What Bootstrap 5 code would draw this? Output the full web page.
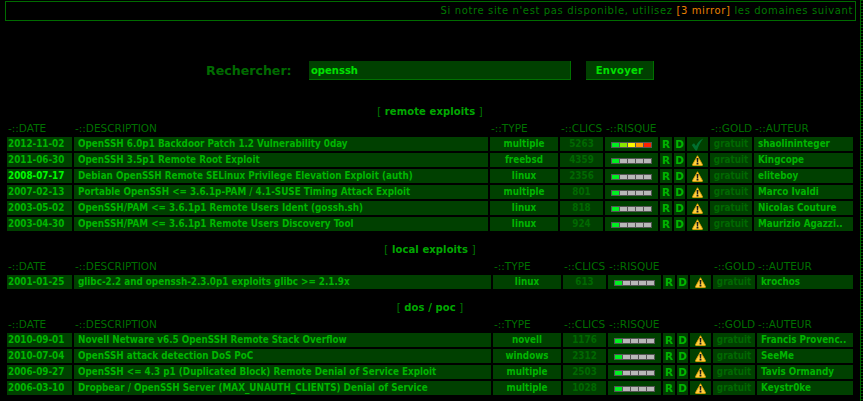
<!DOCTYPE html>
<html lang="fr">
<head>
<meta charset="utf-8">
<title>Rechercher</title>
<link href="https://cdn.jsdelivr.net/npm/bootstrap@5.3.0/dist/css/bootstrap.min.css" rel="stylesheet">
<style>
html{height:100%;overflow:hidden;background:repeating-linear-gradient(#005000 0 1px,#000 1px 3px)}
body{height:100%;overflow:hidden;background:#000;color:#00a800;font-family:"DejaVu Sans",Verdana,sans-serif;font-size:10px;line-height:12px;box-shadow:inset -1px 0 #006000;width:861px;margin:0}
.topbox{margin:1px 0 0 5px;width:851px;height:20px;border:1px solid #006b00;color:#007800;letter-spacing:.63px;line-height:17px;padding-right:2px}
.topbox span{color:#e88000}
.srch{margin-top:40px;height:19px;padding-left:206px}
.srch label{width:103px;font-size:12.6px;line-height:17px;color:#006b00;font-weight:700}
.srch input{width:262px;height:19px;background:#004000;border:0;border-bottom:1px solid #007000;border-right:1px solid #007000;color:#00e000;font:700 10px "DejaVu Sans",sans-serif;padding:1px 2px 0;outline:0}
.srch button{margin-left:15px;width:68px;height:19px;background:#004000;border:0;border-bottom:1px solid #007000;border-right:1px solid #007000;color:#00e000;font:700 10px "DejaVu Sans",sans-serif;letter-spacing:.3px;padding:0}
.sect{font-weight:700;color:#00a800;line-height:12px;padding-right:1px;letter-spacing:.1px}
.sect i{font-style:normal;font-weight:400;color:#007800}
.s1{margin-top:26px}.s2{margin-top:11px}.s3{margin-top:11px}
.xtab{margin:2px 0 0 5px;width:850px;table-layout:fixed;border-collapse:separate;border-spacing:2px;color:#00b400;font:700 9.8px/12px "DejaVu Sans Condensed","DejaVu Sans",sans-serif}
.xtab th{font:400 10.5px/12px "DejaVu Sans",sans-serif;color:#006f00;height:13px;padding:0 0 1px 1px;white-space:nowrap;vertical-align:top}
.xtab td{background:#004000;height:14px;padding:0;white-space:nowrap;overflow:hidden}
.xtab td.dsc,.xtab td.aut{padding-left:4px}
.xtab td.dt{padding-left:1px}
.xtab td.dim{color:#006800}
.xtab td.hot{color:#00f800}
.xtab td.rd{font:700 10.5px/12px "DejaVu Sans",sans-serif}
.c1{width:65px}.c3{width:68px}.c4{width:43px}.c5{width:53px}.c6{width:12px}.c7{width:11px}.c8{width:21px}.c9{width:42px}
.bar{width:41px;height:6px;background:#555;padding:1px;gap:1px;margin:1px auto 0}
.bar b{display:block;width:7px;background:#b8b8b8}
.bar b:first-child{background:#00f020}
.bar.full b:nth-child(2){background:#88e800}
.bar.full b:nth-child(3){background:#f8f800}
.bar.full b:nth-child(4){background:#ff9c00}
.bar.full b:nth-child(5){background:#ff2000}
.ico{display:block;margin:0 auto}
</style>
</head>
<body>
<div class="topbox text-end">Si notre site n'est pas disponible, utilisez <span>[3 mirror]</span> les domaines suivant</div>
<form class="srch d-flex align-items-center"><label>Rechercher:</label><input type="text" value="openssh"><button type="button">Envoyer</button></form>

<svg width="0" height="0" class="d-block"><defs>
<symbol id="warn" viewBox="0 0 12 12"><path d="M6 .8 11.400 10.400a.7.7 0 0 1-.6 1H1.200a.7.7 0 0 1-.6-1Z" fill="#ffd040" stroke="#e8a000" stroke-width=".9"/><path d="M5 3.400h2l-.3 4.400H5.300ZM5 8.500h2v1.800H5Z" fill="#1c1c1c"/></symbol>
<symbol id="chk" viewBox="0 0 13 13"><path d="M.8 7 3 5.200 5 8C6.500 5 8.500 2.500 12.200.6 9.500 4 7.500 8 6 12.500H4.500Z" fill="#007030"/></symbol>
</defs></svg>

<div class="sect text-center s1"><i>[</i> remote exploits <i>]</i></div>
<table class="xtab">
<colgroup><col class="c1"><col style="width:414px"><col class="c3"><col class="c4"><col class="c5"><col class="c6"><col class="c7"><col class="c8"><col class="c9"><col></colgroup>
<tr><th>-::DATE</th><th>-::DESCRIPTION</th><th>-::TYPE</th><th>-::CLICS</th><th>-::RISQUE</th><th></th><th></th><th></th><th>-::GOLD</th><th>-::AUTEUR</th></tr>
<tr><td class="dt">2012-11-02</td><td class="dsc">OpenSSH 6.0p1 Backdoor Patch 1.2 Vulnerability 0day</td><td class="text-center">multiple</td><td class="text-center dim">5263</td><td><div class="bar full d-flex"><b></b><b></b><b></b><b></b><b></b></div></td><td class="text-center rd">R</td><td class="text-center rd">D</td><td><svg class="ico" width="13" height="13"><use href="#chk"/></svg></td><td class="text-center dim">gratuit</td><td class="aut">shaolininteger</td></tr>
<tr><td class="dt">2011-06-30</td><td class="dsc">OpenSSH 3.5p1 Remote Root Exploit</td><td class="text-center">freebsd</td><td class="text-center dim">4359</td><td><div class="bar d-flex"><b></b><b></b><b></b><b></b><b></b></div></td><td class="text-center rd">R</td><td class="text-center rd">D</td><td><svg class="ico" width="11" height="11"><use href="#warn"/></svg></td><td class="text-center dim">gratuit</td><td class="aut">Kingcope</td></tr>
<tr><td class="dt hot">2008-07-17</td><td class="dsc">Debian OpenSSH Remote SELinux Privilege Elevation Exploit (auth)</td><td class="text-center">linux</td><td class="text-center dim">2356</td><td><div class="bar d-flex"><b></b><b></b><b></b><b></b><b></b></div></td><td class="text-center rd">R</td><td class="text-center rd">D</td><td><svg class="ico" width="11" height="11"><use href="#warn"/></svg></td><td class="text-center dim">gratuit</td><td class="aut">eliteboy</td></tr>
<tr><td class="dt">2007-02-13</td><td class="dsc">Portable OpenSSH &lt;= 3.6.1p-PAM / 4.1-SUSE Timing Attack Exploit</td><td class="text-center">multiple</td><td class="text-center dim">801</td><td><div class="bar d-flex"><b></b><b></b><b></b><b></b><b></b></div></td><td class="text-center rd">R</td><td class="text-center rd">D</td><td><svg class="ico" width="11" height="11"><use href="#warn"/></svg></td><td class="text-center dim">gratuit</td><td class="aut">Marco Ivaldi</td></tr>
<tr><td class="dt">2003-05-02</td><td class="dsc">OpenSSH/PAM &lt;= 3.6.1p1 Remote Users Ident (gossh.sh)</td><td class="text-center">linux</td><td class="text-center dim">818</td><td><div class="bar d-flex"><b></b><b></b><b></b><b></b><b></b></div></td><td class="text-center rd">R</td><td class="text-center rd">D</td><td><svg class="ico" width="11" height="11"><use href="#warn"/></svg></td><td class="text-center dim">gratuit</td><td class="aut">Nicolas Couture</td></tr>
<tr><td class="dt">2003-04-30</td><td class="dsc">OpenSSH/PAM &lt;= 3.6.1p1 Remote Users Discovery Tool</td><td class="text-center">linux</td><td class="text-center dim">924</td><td><div class="bar d-flex"><b></b><b></b><b></b><b></b><b></b></div></td><td class="text-center rd">R</td><td class="text-center rd">D</td><td><svg class="ico" width="11" height="11"><use href="#warn"/></svg></td><td class="text-center dim">gratuit</td><td class="aut">Maurizio Agazzi..</td></tr>
</table>

<div class="sect text-center s2"><i>[</i> local exploits <i>]</i></div>
<table class="xtab">
<colgroup><col class="c1"><col style="width:417px"><col class="c3"><col class="c4"><col class="c5"><col class="c6"><col class="c7"><col class="c8"><col class="c9"><col></colgroup>
<tr><th>-::DATE</th><th>-::DESCRIPTION</th><th>-::TYPE</th><th>-::CLICS</th><th>-::RISQUE</th><th></th><th></th><th></th><th>-::GOLD</th><th>-::AUTEUR</th></tr>
<tr><td class="dt">2001-01-25</td><td class="dsc">glibc-2.2 and openssh-2.3.0p1 exploits glibc &gt;= 2.1.9x</td><td class="text-center">linux</td><td class="text-center dim">613</td><td><div class="bar d-flex"><b></b><b></b><b></b><b></b><b></b></div></td><td class="text-center rd">R</td><td class="text-center rd">D</td><td><svg class="ico" width="11" height="11"><use href="#warn"/></svg></td><td class="text-center dim">gratuit</td><td class="aut">krochos</td></tr>
</table>

<div class="sect text-center s3"><i>[</i> dos / poc <i>]</i></div>
<table class="xtab">
<colgroup><col class="c1"><col style="width:417px"><col class="c3"><col class="c4"><col class="c5"><col class="c6"><col class="c7"><col class="c8"><col class="c9"><col></colgroup>
<tr><th>-::DATE</th><th>-::DESCRIPTION</th><th>-::TYPE</th><th>-::CLICS</th><th>-::RISQUE</th><th></th><th></th><th></th><th>-::GOLD</th><th>-::AUTEUR</th></tr>
<tr><td class="dt">2010-09-01</td><td class="dsc">Novell Netware v6.5 OpenSSH Remote Stack Overflow</td><td class="text-center">novell</td><td class="text-center dim">1176</td><td><div class="bar d-flex"><b></b><b></b><b></b><b></b><b></b></div></td><td class="text-center rd">R</td><td class="text-center rd">D</td><td><svg class="ico" width="11" height="11"><use href="#warn"/></svg></td><td class="text-center dim">gratuit</td><td class="aut">Francis Provenc..</td></tr>
<tr><td class="dt">2010-07-04</td><td class="dsc">OpenSSH attack detection DoS PoC</td><td class="text-center">windows</td><td class="text-center dim">2312</td><td><div class="bar d-flex"><b></b><b></b><b></b><b></b><b></b></div></td><td class="text-center rd">R</td><td class="text-center rd">D</td><td><svg class="ico" width="11" height="11"><use href="#warn"/></svg></td><td class="text-center dim">gratuit</td><td class="aut">SeeMe</td></tr>
<tr><td class="dt">2006-09-27</td><td class="dsc">OpenSSH &lt;= 4.3 p1 (Duplicated Block) Remote Denial of Service Exploit</td><td class="text-center">multiple</td><td class="text-center dim">2503</td><td><div class="bar d-flex"><b></b><b></b><b></b><b></b><b></b></div></td><td class="text-center rd">R</td><td class="text-center rd">D</td><td><svg class="ico" width="11" height="11"><use href="#warn"/></svg></td><td class="text-center dim">gratuit</td><td class="aut">Tavis Ormandy</td></tr>
<tr><td class="dt">2006-03-10</td><td class="dsc">Dropbear / OpenSSH Server (MAX_UNAUTH_CLIENTS) Denial of Service</td><td class="text-center">multiple</td><td class="text-center dim">1028</td><td><div class="bar d-flex"><b></b><b></b><b></b><b></b><b></b></div></td><td class="text-center rd">R</td><td class="text-center rd">D</td><td><svg class="ico" width="11" height="11"><use href="#warn"/></svg></td><td class="text-center dim">gratuit</td><td class="aut">Keystr0ke</td></tr>
</table>
<script src="https://cdn.jsdelivr.net/npm/bootstrap@5.3.0/dist/js/bootstrap.bundle.min.js"></script>
</body>
</html>
